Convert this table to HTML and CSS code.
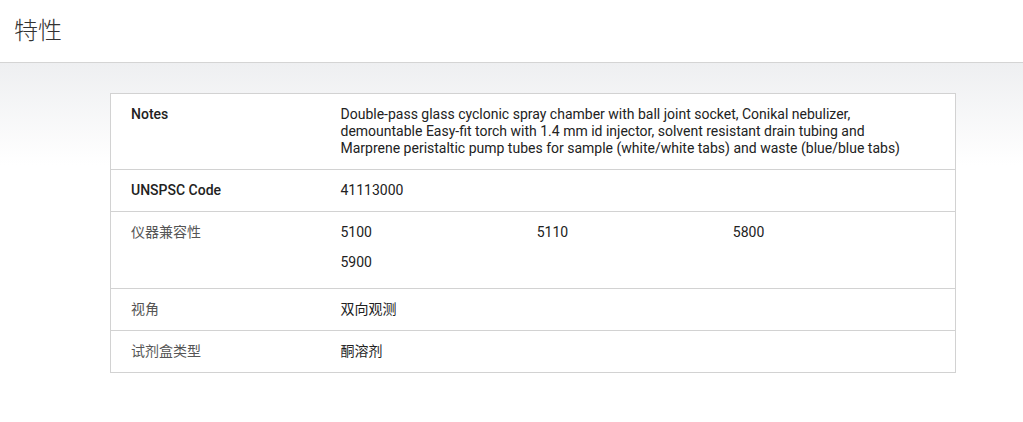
FILE: index.html
```html
<!DOCTYPE html>
<html lang="zh-CN">
<head>
<meta charset="utf-8">
<title>特性</title>
<link rel="stylesheet" href="styles.css">
</head>
<body>
<header class="page-header">
  <h2 class="page-title">特性</h2>
</header>
<main class="content">
  <table class="spec-table">
    <colgroup>
      <col class="col-label">
      <col class="col-value">
    </colgroup>
    <tbody>
      <tr>
        <th class="label label-strong">Notes</th>
        <td class="value">Double-pass glass cyclonic spray chamber with ball joint socket, Conikal nebulizer, demountable Easy-fit torch with 1.4 mm id injector, solvent resistant drain tubing and Marprene peristaltic pump tubes for sample (white/white tabs) and waste (blue/blue tabs)</td>
      </tr>
      <tr>
        <th class="label label-strong">UNSPSC Code</th>
        <td class="value">41113000</td>
      </tr>
      <tr>
        <th class="label">仪器兼容性</th>
        <td class="value">
          <ul class="compat-list">
            <li>5100</li>
            <li>5110</li>
            <li>5800</li>
            <li>5900</li>
          </ul>
        </td>
      </tr>
      <tr>
        <th class="label">视角</th>
        <td class="value">双向观测</td>
      </tr>
      <tr>
        <th class="label">试剂盒类型</th>
        <td class="value">酮溶剂</td>
      </tr>
    </tbody>
  </table>
</main>
</body>
</html>
```

FILE: styles.css
```css
html, body {
  margin: 0;
  padding: 0;
  background: #fff;
}

body {
  font-family: Roboto, "Noto Sans CJK SC", sans-serif;
  color: #222;
}

.page-header {
  height: 62px;
  border-bottom: 1px solid #d4d4d4;
  box-sizing: content-box;
  display: flex;
  align-items: center;
  padding-left: 14px;
  background: #fff;
}

.page-title {
  margin: 0;
  font-family: "Noto Sans CJK SC", sans-serif;
  font-size: 24px;
  font-weight: 300;
  color: #333;
  line-height: 1;
  padding-bottom: 4px;
}

.content {
  background: linear-gradient(to bottom, #eeeff1 0px, #ffffff 102px, #ffffff 100%);
  padding: 30px 67px 40px 110px;
  min-height: 300px;
}

.spec-table {
  width: 846px;
  table-layout: fixed;
  border-collapse: collapse;
  background: #fff;
  border: 1px solid #d2d2d2;
  font-size: 14px;
  line-height: 17px;
}

.col-label {
  width: 210px;
}

.spec-table tr {
  border-bottom: 1px solid #d2d2d2;
}

.label {
  padding: 12px 20px 12px 20px;
  text-align: left;
  vertical-align: top;
  font-weight: 400;
  color: #555;
}

.label-strong {
  font-weight: 500;
  color: #222;
}

.value {
  padding: 12px 34px 12px 20px;
  vertical-align: top;
  color: #222;
}

.compat-list {
  list-style: none;
  margin: 0 -8px 0 0;
  padding: 0 0 5px 0;
  display: flex;
  flex-wrap: wrap;
  row-gap: 13px;
}

.compat-list li {
  width: 33.333%;
}
```
